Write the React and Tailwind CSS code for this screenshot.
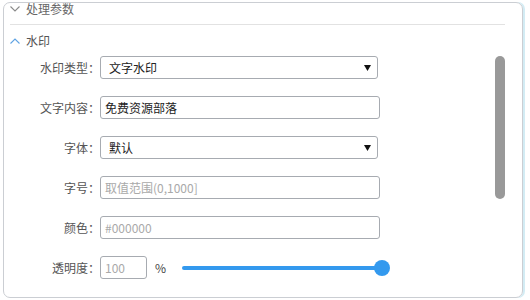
import React from "react";

const font = { fontFamily: '"Noto Sans CJK SC", "Noto Sans", sans-serif' };

function Label({ children }) {
  return (
    <div className="w-[96px] shrink-0 text-right text-[12px] leading-[23px] text-[#555]">{children}</div>
  );
}

function SelectBox({ value }) {
  return (
    <div className="flex h-[23px] w-[278px] items-center justify-between rounded-[3px] border border-[#a7abb1] pl-[8px] pr-[6px] text-[12px] text-[#222]">
      <span className="leading-[21px]">{value}</span>
      <svg width="7" height="6" viewBox="0 0 7 6">
        <polygon points="0,0 7,0 3.5,6" fill="#111" />
      </svg>
    </div>
  );
}

function InputBox({ value, placeholder, w = "w-[280px]" }) {
  return (
    <div className={`flex h-[23px] ${w} items-center rounded-[3px] border border-[#a7abb1] pl-[4px] text-[12px]`}>
      {value ? (
        <span className="leading-[21px] text-[#222]">{value}</span>
      ) : (
        <span className="leading-[21px] text-[#a9a9a9]">{placeholder}</span>
      )}
    </div>
  );
}

export default function App() {
  return (
    <div className="h-[300px] w-[530px] overflow-hidden bg-white pl-[3px] pt-[2px]" style={font}>
      <div className="relative h-[296px] w-[520px] rounded-[7px] border border-[#cbced3] shadow-[2px_0_0_#d3ecf4]">
        {/* header */}
        <div className="flex h-[12px] items-center pl-[6px]">
          <svg width="10" height="6" viewBox="0 0 10 6" className="mr-[6px]">
            <polyline points="0.5,0.5 5,5 9.5,0.5" fill="none" stroke="#8a8a8a" strokeWidth="1.1" />
          </svg>
          <span className="text-[12px] leading-[12px] text-[#666]">处理参数</span>
        </div>
        <div className="ml-[6px] mt-[9px] h-px w-[495px] bg-[#e2e2e2]" />
        <div className="mt-[10px] flex h-[12px] items-center pl-[6px]">
          <svg width="10" height="6" viewBox="0 0 10 6" className="mr-[6px]">
            <polyline points="0.5,5.5 5,1 9.5,5.5" fill="none" stroke="#5fa3e3" strokeWidth="1.1" />
          </svg>
          <span className="text-[12px] leading-[12px] text-[#555]">水印</span>
        </div>

        <div className="mt-[9px] flex flex-col gap-[17px]">
          <div className="flex items-center">
            <Label>水印类型：</Label>
            <SelectBox value="文字水印" />
          </div>
          <div className="flex items-center">
            <Label>文字内容：</Label>
            <InputBox value="免费资源部落" />
          </div>
          <div className="flex items-center">
            <Label>字体：</Label>
            <SelectBox value="默认" />
          </div>
          <div className="flex items-center">
            <Label>字号：</Label>
            <InputBox placeholder="取值范围(0,1000]" />
          </div>
          <div className="flex items-center">
            <Label>颜色：</Label>
            <InputBox placeholder="#000000" />
          </div>
          <div className="flex items-center">
            <Label>透明度：</Label>
            <InputBox placeholder="100" w="w-[47px]" />
            <span className="ml-[8px] text-[12px] text-[#444]">%</span>
            <div className="relative ml-[16px] h-[16px] w-[208px]">
              <div className="absolute left-0 right-[6px] top-[6px] h-[4px] rounded-full bg-[#3399ee]" />
              <div className="absolute right-0 top-0 h-[16px] w-[16px] rounded-full bg-[#3399ee]" />
            </div>
          </div>
        </div>

        {/* scrollbar */}
        <div className="absolute left-[491px] top-[53px] h-[143px] w-[10px] rounded-full bg-[#999]" />
      </div>
    </div>
  );
}
